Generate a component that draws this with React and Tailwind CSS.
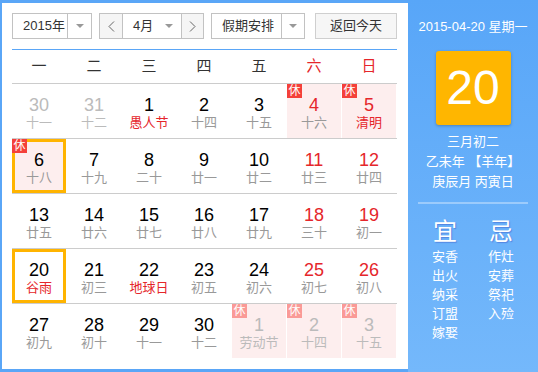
import React from 'react'

const rows = [
  [
    { n: 30, l: '十一', muted: true },
    { n: 31, l: '十二', muted: true },
    { n: 1, l: '愚人节', fest: true },
    { n: 2, l: '十四' },
    { n: 3, l: '十五' },
    { n: 4, l: '十六', red: true, hol: true },
    { n: 5, l: '清明', red: true, hol: true, fest: true },
  ],
  [
    { n: 6, l: '十八', hol: true, sel: true },
    { n: 7, l: '十九' },
    { n: 8, l: '二十' },
    { n: 9, l: '廿一' },
    { n: 10, l: '廿二' },
    { n: 11, l: '廿三', red: true },
    { n: 12, l: '廿四', red: true },
  ],
  [
    { n: 13, l: '廿五' },
    { n: 14, l: '廿六' },
    { n: 15, l: '廿七' },
    { n: 16, l: '廿八' },
    { n: 17, l: '廿九' },
    { n: 18, l: '三十', red: true },
    { n: 19, l: '初一', red: true },
  ],
  [
    { n: 20, l: '谷雨', fest: true, sel: true },
    { n: 21, l: '初三' },
    { n: 22, l: '地球日', fest: true },
    { n: 23, l: '初五' },
    { n: 24, l: '初六' },
    { n: 25, l: '初七', red: true },
    { n: 26, l: '初八', red: true },
  ],
  [
    { n: 27, l: '初九' },
    { n: 28, l: '初十' },
    { n: 29, l: '十一' },
    { n: 30, l: '十二' },
    { n: 1, l: '劳动节', muted: true, hol: true, faded: true },
    { n: 2, l: '十四', muted: true, hol: true, faded: true },
    { n: 3, l: '十五', muted: true, hol: true, faded: true },
  ],
]

const weekdays = ['一', '二', '三', '四', '五', '六', '日']

function Arrow() {
  return <span className="w-0 h-0 border-x-[4px] border-x-transparent border-t-[4px] border-t-[#999]" />
}

function Chevron({ dir }) {
  return (
    <svg width="7" height="11" viewBox="0 0 7 11" fill="none">
      <polyline
        points={dir === 'left' ? '6,0.5 1,5.5 6,10.5' : '1,0.5 6,5.5 1,10.5'}
        stroke="#666"
        strokeWidth="1"
      />
    </svg>
  )
}

function Cell({ d }) {
  const numColor = d.muted ? 'text-[#bbb]' : d.red ? 'text-[#e5262b]' : 'text-black'
  const lunarColor = d.fest && !d.muted ? 'text-[#e5262b]' : d.muted ? 'text-[#bbb]' : 'text-[#999]'
  return (
    <div
      className={`relative h-[54px] flex flex-col items-center ${d.hol ? 'bg-[#fdeeee]' : ''} ${
        d.sel ? 'border-[3px] border-[#ffb400] pt-[8px]' : 'pt-[11px]'
      }`}
    >
      {d.hol && (
        <span
          className={`absolute top-0 left-0 ${d.sel ? '-mt-[3px] -ml-[3px]' : ''} w-[15px] h-[14px] flex items-center justify-center text-[12px] leading-none text-white ${
            d.faded ? 'bg-[#fa9a97]' : 'bg-[#f4403a]'
          }`}
        >
          休
        </span>
      )}
      <span className={`text-[18px] leading-[20px] ${numColor}`}>{d.n}</span>
      <span className={`text-[13px] leading-[16px] ${lunarColor}`}>{d.l}</span>
    </div>
  )
}

export default function App() {
  return (
    <div className="w-[538px] h-[372px] flex font-['Liberation_Sans','Noto_Sans_CJK_SC',sans-serif]">
      {/* Left — calendar */}
      <div className="w-[408px] h-full bg-[#5aa6f7] pl-[2px] pt-[3px] pb-[3px]">
        <div className="h-full bg-white pl-[10px] pt-[10px]">
          {/* Controls */}
          <div className="flex h-[26px] text-[13px] text-[#333]">
            <div className="w-[80px] flex border border-[#c2c2c2]">
              <span className="w-[54px] flex items-center pl-[10px]">2015年</span>
              <span className="flex-1 flex items-center justify-center border-l border-[#c2c2c2]">
                <Arrow />
              </span>
            </div>
            <div className="ml-[7px] w-[105px] flex border border-[#c2c2c2]">
              <span className="w-[22px] flex items-center justify-center bg-[#f5f5f5]">
                <Chevron dir="left" />
              </span>
              <span className="w-[60px] flex items-center justify-between pl-[10px] pr-[8px] border-x border-[#c2c2c2]">
                4月
                <Arrow />
              </span>
              <span className="flex-1 flex items-center justify-center bg-[#f5f5f5]">
                <Chevron dir="right" />
              </span>
            </div>
            <div className="ml-[7px] w-[94px] flex border border-[#c2c2c2]">
              <span className="w-[69px] flex items-center pl-[10px]">假期安排</span>
              <span className="flex-1 flex items-center justify-center border-l border-[#c2c2c2]">
                <Arrow />
              </span>
            </div>
            <button className="ml-[10px] w-[82px] flex items-center justify-center border border-[#cfcfcf] bg-[#f6f6f6]">
              返回今天
            </button>
          </div>

          <div className="w-[385px] mt-[10px] h-px bg-[#5aa6f7]" />

          {/* Weekday header */}
          <div className="w-[385px] h-[34px] grid grid-cols-[repeat(7,54px)] gap-x-px items-center border-b border-[#ccc] text-[15px]">
            {weekdays.map((w, i) => (
              <span key={w} className={`text-center ${i > 4 ? 'text-[#e5262b]' : 'text-[#333]'}`}>
                {w}
              </span>
            ))}
          </div>

          {/* Days */}
          {rows.map((row, ri) => (
            <div
              key={ri}
              className={`w-[385px] grid grid-cols-[repeat(7,54px)] gap-x-px ${
                ri < rows.length - 1 ? 'border-b border-[#ccc]' : ''
              }`}
            >
              {row.map((d, ci) => (
                <Cell key={ci} d={d} />
              ))}
            </div>
          ))}
        </div>
      </div>

      {/* Right — day detail */}
      <div className="w-[130px] h-full bg-gradient-to-b from-[#58a6f8] to-[#74b8fb] flex flex-col items-center pt-[17px] text-white">
        <p className="text-[13px] leading-[20px]">2015-04-20 星期一</p>
        <div className="mt-[14px] w-[75px] h-[74px] rounded-[3px] bg-[#ffb600] shadow-[0_1px_3px_rgba(0,0,0,0.25)] flex items-center justify-center">
          <span className="text-[48px] leading-none">20</span>
        </div>
        <div className="mt-[7px] text-[13px] leading-[20px] text-center">
          <p>三月初二</p>
          <p>乙未年 【羊年】</p>
          <p>庚辰月 丙寅日</p>
        </div>
        <div className="mt-[10px] w-[110px] h-[2px] bg-white/35" />
        <div className="mt-[14px] flex">
          <div className="w-[56px] flex flex-col items-center">
            <span className="text-[24px] leading-[28px] [text-shadow:1px_1px_1px_rgba(60,90,200,0.5)]">宜</span>
            <div className="mt-[1px] text-[13px] leading-[19px] text-center">
              <p>安香</p>
              <p>出火</p>
              <p>纳采</p>
              <p>订盟</p>
              <p>嫁娶</p>
            </div>
          </div>
          <div className="w-[56px] flex flex-col items-center">
            <span className="text-[24px] leading-[28px] [text-shadow:1px_1px_1px_rgba(60,90,200,0.5)]">忌</span>
            <div className="mt-[1px] text-[13px] leading-[19px] text-center">
              <p>作灶</p>
              <p>安葬</p>
              <p>祭祀</p>
              <p>入殓</p>
            </div>
          </div>
        </div>
      </div>
    </div>
  )
}
